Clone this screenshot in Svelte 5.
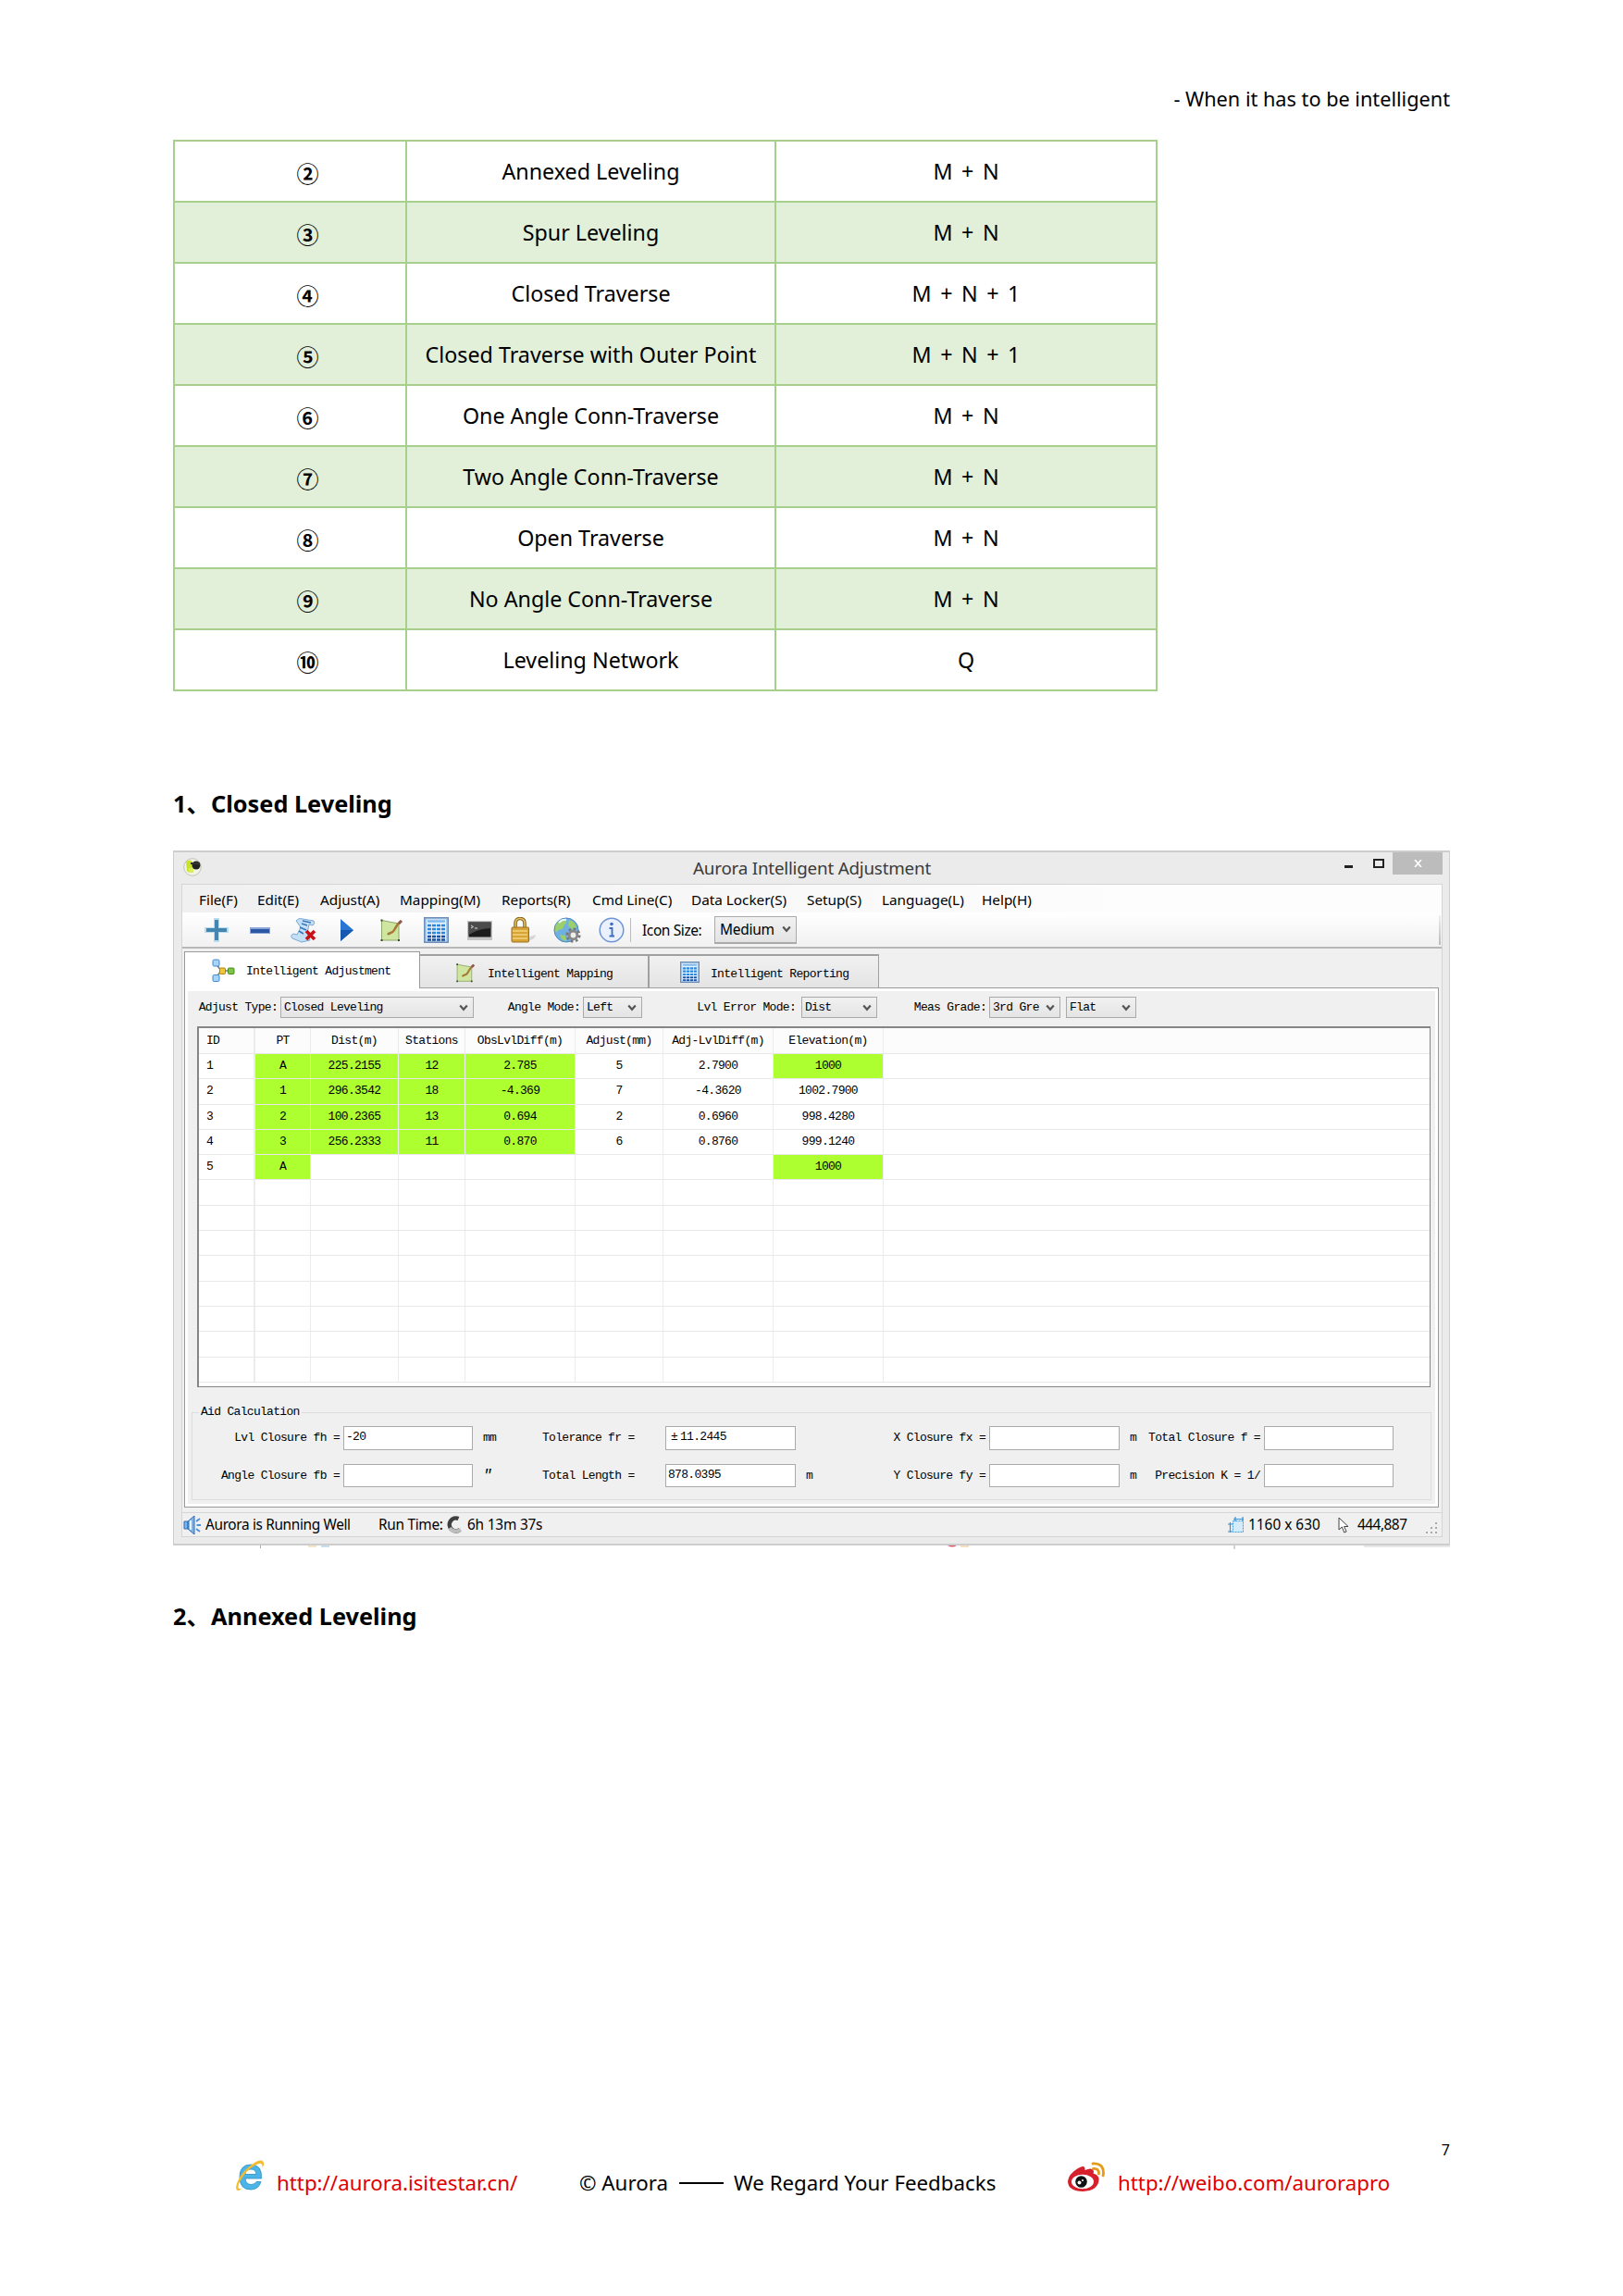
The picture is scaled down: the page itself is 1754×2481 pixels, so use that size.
<script>
  const methods = [
    ['②', 'Annexed Leveling', 'M + N'],
    ['③', 'Spur Leveling', 'M + N'],
    ['④', 'Closed Traverse', 'M + N + 1'],
    ['⑤', 'Closed Traverse with Outer Point', 'M + N + 1'],
    ['⑥', 'One Angle Conn-Traverse', 'M + N'],
    ['⑦', 'Two Angle Conn-Traverse', 'M + N'],
    ['⑧', 'Open Traverse', 'M + N'],
    ['⑨', 'No Angle Conn-Traverse', 'M + N'],
    ['⑩', 'Leveling Network', 'Q']
  ];
  const menu = ['File(F)', 'Edit(E)', 'Adjust(A)', 'Mapping(M)', 'Reports(R)', 'Cmd Line(C)', 'Data Locker(S)', 'Setup(S)', 'Language(L)', 'Help(H)'];
  const heads = ['ID', 'PT', 'Dist(m)', 'Stations', 'ObsLvlDiff(m)', 'Adjust(mm)', 'Adj-LvlDiff(m)', 'Elevation(m)', ''];
  const data = [
    ['1', 'A', '225.2155', '12', '2.785', '5', '2.7900', '1000', ''],
    ['2', '1', '296.3542', '18', '-4.369', '7', '-4.3620', '1002.7900', ''],
    ['3', '2', '100.2365', '13', '0.694', '2', '0.6960', '998.4280', ''],
    ['4', '3', '256.2333', '11', '0.870', '6', '0.8760', '999.1240', ''],
    ['5', 'A', '', '', '', '', '', '1000', '']
  ];
  const blank = Array(9).fill('');
  const rows = [...data, ...Array(8).fill(blank)];
  const isInput = (r, c) => (c === 1 && r < 5) || (c > 1 && c < 5 && r < 4) || (c === 7 && (r === 0 || r === 4));
</script>

{#snippet chevron()}
  <svg class="chev" viewBox="0 0 10 8"><path d="M1.2 1.5 5 5.8 8.8 1.5" fill="none" stroke="#555" stroke-width="2.2" /></svg>
{/snippet}

{#snippet mapIcon(size)}
  <svg width={size} height={size} viewBox="0 0 26 26">
    <path d="M2.5 2.5 21 6V24H2.500Z" fill="#cfe6a0" stroke="#8fa568" />
    <path d="M9 18c2-3 5-1 7-5s4-7 7.500-10" fill="none" stroke="#a67a35" stroke-width="2.500" />
    <path d="M20 5l3-3 2 2-3 3z" fill="#8c5a50" />
    <path d="M1.500 1.500h2v2h-2zM1.500 23h2v2h-2zM20 23h2v2h-2z" fill="#35482a" />
  </svg>
{/snippet}

{#snippet sheetIcon(w, h)}
  <svg width={w} height={h} viewBox="0 0 27 28" preserveAspectRatio="none">
    <rect x=".7" y=".7" width="25.600" height="26.600" fill="#a9c8ea" stroke="#6c8db5" stroke-width="1.400" />
    <rect x="3" y="2.500" width="21" height="23" fill="#e6f2fd" />
    <path d="M4 4.500h19" stroke="#7fb9ea" stroke-width="2.500" />
    <path d="M4 9h19M4 13h19M4 17h19" stroke="#2f86d8" stroke-width="2.600" stroke-dasharray="4 1" />
    <path d="M4 21h19M4 24.500h19" stroke="#1d4f9e" stroke-width="2.400" stroke-dasharray="4 1" />
  </svg>
{/snippet}

<div class="page">
  <header>- When it has to be intelligent</header>

  <div class="methods">
    {#each methods as [no, name, count], i}
      <div class="mrow" class:alt={i % 2 === 1}>
        <span class="no">{no}</span><span>{name}</span><span class="formula">{count}</span>
      </div>
    {/each}
  </div>

  <h2 class="first"><span class="num">1、</span>Closed Leveling</h2>

  <div class="window">
    <div class="titlebar">
      <svg class="logo" viewBox="0 0 20 20">
        <circle cx="10" cy="10" r="9.300" fill="#f2f3e8" stroke="#bfc2b8" />
        <path d="M3 4q4-3 7 0v11q-4 2-6-1Z" fill="#c9e32d" />
        <path d="M5 11h6v5H7Z" fill="#dcec5a" />
        <circle cx="14" cy="8" r="4.500" fill="#20221f" />
        <path d="M8 5h10v2H8z" fill="#333" />
      </svg>
      <span class="title">Aurora Intelligent Adjustment</span>
      <i class="min"></i><i class="max"></i>
      <span class="close"><svg width="9" height="8" viewBox="0 0 9 8"><path d="M1 0 8 8M8 0 1 8" stroke="#fff" stroke-width="1.700" /></svg></span>
    </div>

    <div class="client">
      <nav>{#each menu as m}<span>{m}</span>{/each}</nav>

      <div class="toolbar">
        <div class="icons">
          <svg width="26" height="26" viewBox="0 0 26 26">
            <path d="M10 0h6v10h10v6H16v10h-6V16H0v-6h10Z" fill="#b9ddec" />
            <path d="M11 2h4v9h9v4h-9v9h-4v-9H2v-4h9Z" fill="#4486b0" />
          </svg>
          <svg width="22" height="7" viewBox="0 0 22 7"><rect width="22" height="7" fill="#8aa6d8" /><rect x="1" y="2" width="20" height="4" fill="#2c57a5" /></svg>
          <svg width="28" height="27" viewBox="0 0 28 27">
            <path d="M6 3Q9-1 13 1l12 2q2 3-1 5l-4-1-2 9 3 8-9 2-10-4q-3-3 1-5l4 1 4-8Z" fill="#c4e0f6" stroke="#78a9d6" />
            <path d="M12 6l6 2M10 10l7 3M9 14l5 3M13 3l9 2" stroke="#3577b8" stroke-width="1.500" />
            <path d="M17 14l9 9M26 14l-9 9" stroke="#c81216" stroke-width="3.600" />
          </svg>
          <svg width="14" height="24" viewBox="0 0 14 24"><path d="M0 0 14 12 0 24Z" fill="#2a75d2" /><path d="M0 12h14L0 24Z" fill="#1558b0" /></svg>
          {@render mapIcon(26)}
          {@render sheetIcon(27, 28)}
          <svg width="27" height="21" viewBox="0 0 27 21">
            <rect width="27" height="21" fill="#c4c4c4" /><rect x="1.500" y="1.500" width="24" height="16" fill="#1b1b1b" />
            <path d="M1.500 1.500h24V8Q14 8 1.500 15Z" fill="#4b4b4b" /><path d="M4 5l2.500 1.500L4 8M8 8h3" fill="none" stroke="#ddd" />
          </svg>
          <svg width="28" height="28" viewBox="0 0 28 28">
            <path d="M18 22l9-3q0 5-9 7Z" fill="#d5d5d5" />
            <path d="M5 12V7q0-5.500 5-5.500T15 7v5" fill="none" stroke="#8a6518" stroke-width="3.600" />
            <path d="M5 12V7q0-5.500 5-5.500T15 7v5" fill="none" stroke="#e4c268" stroke-width="1.500" />
            <rect x="1" y="11" width="18.500" height="16" rx="1" fill="#d9a436" stroke="#9a7120" />
            <path d="M2 15h16M2 19h16M2 23h16" stroke="#f2d37e" stroke-width="1.300" />
          </svg>
          <svg width="30" height="28" viewBox="0 0 30 28">
            <circle cx="14" cy="14" r="13" fill="#6fb0e2" stroke="#4a88bd" />
            <path d="M3 8Q6 2 13 2q3 4-1 6l-2 5q-5 0-7 4-2-5 0-9ZM17 3q7 2 8 8l-5 2-4-4ZM7 19l6 1 1 6Q9 26 7 19Z" fill="#9bcf6a" />
            <path d="M6 6q4-4 8-3" stroke="#e9f7ff" stroke-width="2" fill="none" />
            <circle cx="21.500" cy="19.500" r="6.800" fill="none" stroke="#777" stroke-width="2.500" stroke-dasharray="2.700 2.640" />
            <circle cx="21.500" cy="19.500" r="4.300" fill="#eee" stroke="#888" stroke-width="2.800" />
          </svg>
          <svg width="28" height="28" viewBox="0 0 28 28">
            <circle cx="14" cy="14" r="12.800" fill="#eaf1fd" stroke="#6e93d6" stroke-width="1.500" />
            <circle cx="14" cy="7.500" r="1.800" fill="#3d6cc6" /><path d="M11.500 12h3v8M11.500 20.500h5.500" fill="none" stroke="#3d6cc6" stroke-width="1.800" />
          </svg>
        </div>
        <i class="sep"></i>
        <span class="sizelabel">Icon Size:</span>
        <span class="combo sizecombo">Medium{@render chevron()}</span>
        <i class="endsep"></i>
      </div>

      <div class="tabs">
        <span class="tab active">
          <svg width="25" height="26" viewBox="0 0 25 26">
            <path d="M4 5l6 8h10M4 21l6-8" fill="none" stroke="#7a7a72" stroke-width="1.600" />
            <rect x="1" y="1" width="7" height="7" rx="1.500" fill="#a9d4f7" stroke="#3f86cc" />
            <rect x="1" y="17.500" width="7" height="7" rx="1.500" fill="#a9d4f7" stroke="#3f86cc" />
            <rect x="8.500" y="10" width="6" height="6.500" rx="1" fill="#f0c63a" stroke="#a9841b" />
            <rect x="17.500" y="10" width="6.500" height="6.500" rx="1" fill="#7cc444" stroke="#4c8a26" />
          </svg><span>Intelligent Adjustment</span>
        </span>
        <span class="tab second">{@render mapIcon(22)}<span>Intelligent Mapping</span></span>
        <span class="tab third">{@render sheetIcon(21, 23)}<span>Intelligent Reporting</span></span>
        <i></i>
      </div>

      <div class="panel">
        <div class="filters">
          <span>Adjust Type:</span><span class="combo">Closed Leveling{@render chevron()}</span>
          <span>Angle Mode:</span><span class="combo">Left{@render chevron()}</span>
          <span class="error">Lvl Error Mode:</span><span class="combo">Dist{@render chevron()}</span>
          <span>Meas Grade:</span><span class="combo">3rd Gre{@render chevron()}</span>
          <span class="combo flat">Flat{@render chevron()}</span>
        </div>

        <div class="grid">
          <div class="grow head">{#each heads as h}<span>{h}</span>{/each}</div>
          {#each rows as row, r}
            <div class="grow">{#each row as cell, c}<span class:green={isInput(r, c)}>{cell}</span>{/each}</div>
          {/each}
        </div>

        <fieldset>
          <legend>Aid Calculation</legend>
          <div class="calc">
            <span class="r">Lvl Closure fh =</span><b>-20</b><span>mm</span>
            <span class="l">Tolerance fr =</span><b><u>±</u>11.2445</b><span></span>
            <span class="x">X Closure fx =</span><b></b><span>m</span>
            <span class="x">Total Closure f =</span><b></b>
            <span class="r">Angle Closure fb =</span><b></b><span class="sec">″</span>
            <span class="l">Total Length =</span><b>878.0395</b><span>m</span>
            <span class="x">Y Closure fy =</span><b></b><span>m</span>
            <span class="x">Precision K = 1/</span><b></b>
          </div>
        </fieldset>
      </div>

      <div class="status">
        <svg width="20" height="22" viewBox="0 0 20 22">
          <path d="M1 7h4v8H1zM5 7l7-6v20l-7-6z" fill="#7db4ea" stroke="#2c6db8" />
          <path d="M8 6v10" stroke="#e7f4ff" stroke-width="2" /><path d="M14 7l4-3M14.500 11H19M14 15l4 3" stroke="#4b8fd6" stroke-width="1.800" />
        </svg>
        <span class="s1">Aurora is Running Well</span>
        <span class="s2">Run Time:</span>
        <svg width="19" height="20" viewBox="0 0 19 20"><path d="M13.500 3A7 7 0 1 0 15 15" fill="none" stroke="#3f3f3f" stroke-width="4.500" /><path d="M4 13q4 6 12 2" fill="none" stroke="#bdbdbd" stroke-width="4" /></svg>
        <span class="s3">6h 13m 37s</span>
        <svg class="dim" width="18" height="18" viewBox="0 0 18 18">
          <path d="M5.500 4.500h11v12h-11z" fill="#d3ebfb" stroke="#3d9fe0" stroke-dasharray="2 1" /><path d="M6 2.500h11M2.500 6v11M8 0v5M16 0v5M0 8h5M0 16h5" stroke="#3291d8" stroke-width="1.200" />
        </svg>
        <span class="s4">1160 x 630</span>
        <svg class="cur" width="12" height="18" viewBox="0 0 12 18"><path d="M1 1v13l3.300-3 2.500 6 2.300-1-2.500-5.500H11Z" fill="#fff" stroke="#444" /></svg>
        <span class="s5">444,887</span>
        <svg class="grip" width="14" height="14" viewBox="0 0 14 14"><path d="M10 1h2v2h-2zM5 6h2v2H5zM10 6h2v2h-2zM0 11h2v2H0zM5 11h2v2H5zM10 11h2v2h-2z" fill="#a8a8a8" /></svg>
      </div>
    </div>
  </div>

  <svg class="fringe" width="1380" height="5" viewBox="0 0 1380 5">
    <path d="M94.500 0v3M1147 0v4" stroke="#aaa" /><path d="M146 1h9" stroke="#f4e6c4" stroke-width="2" /><path d="M160 1h9" stroke="#c8dff0" stroke-width="2" />
    <path d="M837 0q5 3 10 0z" fill="#d9536a" /><path d="M851 1h9" stroke="#f6e0c0" stroke-width="2" /><path d="M1287 1h93" stroke="#e8e8e8" stroke-width="2" />
  </svg>

  <h2><span class="num">2、</span>Annexed Leveling</h2>

  <div class="pageno">7</div>
  <footer>
    <svg class="ie" width="33" height="36" viewBox="0 0 33 36">
      <path d="M28.500 21H11q.5 6.500 6.500 6.500 4 0 5.500-3h5q-2.500 8.500-11 8.500Q5 33 5 19.500T17 6q12.500 0 11.500 15ZM11 16.500h12q-.5-5.500-6-5.500t-6 5.500Z" fill="#4db4e6" stroke="#2b8fc8" stroke-width=".8" fill-rule="evenodd" />
      <path d="M4 34Q-1 34 2.500 25 7 14 18 6q10-7 12.500-3 1.500 2.500-1 7 .5-6-3.500-5Q18 7 10 17 3 26 3.500 31q.5 2 4 .5Q5 34 4 34Z" fill="#f3bd2f" />
    </svg>
    <span class="url a">http://aurora.isitestar.cn/</span>
    <span class="copy">© Aurora</span><i></i><span class="regard">We Regard Your Feedbacks</span>
    <svg class="weibo" width="42" height="33" viewBox="0 0 42 33">
      <path d="M1 21Q2 13 12 7q7-4 7.500 0v2q7-3 9 0 1 2 0 3.500 7 2 6 8Q33 31 17.500 32 1 31.500 1 21Z" fill="#d6202b" />
      <ellipse cx="17" cy="21.500" rx="12" ry="7.800" fill="#fff" /><circle cx="15.500" cy="21.500" r="6.300" fill="#111" /><circle cx="13.500" cy="22.500" r="2" fill="#fff" /><circle cx="17" cy="20" r="1" fill="#fff" />
      <path d="M28 2q11.500-1 11.500 10.500 0 1-.5 2.500M28.500 7.500q6.500-.5 6 5.500" fill="none" stroke="#e59b1a" stroke-width="2.800" stroke-linecap="round" />
    </svg>
    <span class="url b">http://weibo.com/aurorapro</span>
  </footer>
</div>

<style>
  :global(body) { background: #fff; }
  .page { width: 1754px; height: 2481px; box-sizing: border-box; padding: 0 187px; overflow: hidden; color: #000; font: 23.250px/30px 'Noto Sans', 'Noto Sans CJK SC', sans-serif; display: flex; flex-direction: column; }
  .page * { box-sizing: border-box; white-space: nowrap; }
  svg { display: block; flex: none; }
  header { height: 151px; padding-top: 92px; text-align: right; font-size: 21.700px; }
  .methods { width: 1064px; border: 2px solid #a8d08d; border-bottom: 0; flex: none; }
  .mrow { display: grid; grid-template-columns: 249px 399px 1fr; height: 66px; border-bottom: 2px solid #a8d08d; }
  .mrow span { display: flex; align-items: center; justify-content: center; padding-bottom: 1px; }
  .mrow span + span { border-left: 2px solid #a8d08d; }
  .mrow .no { padding: 4px 0 0 38px; font: 700 24px/30px 'Noto Sans CJK SC', sans-serif; }
  .mrow .formula { word-spacing: 3.500px; }
  .alt { background: #e2efd9; }
  h2 { margin: 0; font-size: 25.300px; line-height: 34px; height: 34px; display: flex; flex: none; }
  h2 .num { width: 41px; }
  h2.first { margin: 104px 0 34px; }
  .fringe { margin-bottom: 54px; }

  .window { height: 751px; border: 2px solid #cdcdcd; border-width: 2px 1px; background: #ebebeb; padding: 0 7px 7px 8px; flex: none; display: flex; flex-direction: column; }
  .titlebar { height: 34px; display: flex; align-items: flex-start; flex: none; }
  .logo { width: 20px; height: 20px; margin: 6px 0 0 2px; }
  .title { margin-left: 531px; width: 265px; color: #3a3a3a; font: 18.800px/35px 'Noto Sans', sans-serif; letter-spacing: -0.200px; }
  .min { width: 9px; height: 3px; background: #222; margin: 14px 22px 0 440px; }
  .max { width: 12px; height: 10px; border: 2px solid #222; margin: 7px 9px 0 0; }
  .close { width: 54px; height: 24px; background: #bcbcbc; display: flex; align-items: center; justify-content: center; }
  .client { border: 1px solid #d5d5d5; flex: 1; background: #f0f0f0; display: flex; flex-direction: column; }
  nav { display: grid; grid-template-columns: 63px 68px 86px 110px 98px 107px 125px 81px 108px 1fr; padding: 1px 0 0 18px; height: 30px; flex: none; background: linear-gradient(90deg, #f0f0f0, #fdfdfd 75%); font: 15.300px/30px 'Noto Sans', sans-serif; }
  .toolbar { height: 39px; flex: none; display: flex; align-items: center; background: linear-gradient(#fff, #f1f1f1); border-bottom: 2px solid #b8b8b8; font: 15.500px/24px 'Noto Sans', sans-serif; }
  .icons { width: 473px; padding: 1px 0 0 13px; display: grid; grid-template-columns: 47px 47px 47px 47px 50px 47px 47px 47px 48px 48px; place-items: center; flex: none; }
  .sep { width: 1px; height: 26px; background: #bbb; margin-left: 11px; }
  .sizelabel { margin-left: 12px; width: 78px; letter-spacing: -0.400px; }
  .combo { border: 1px solid #aaa; background: linear-gradient(#f1f1f1, #e4e4e4); display: flex; align-items: center; justify-content: space-between; padding: 0 5px 0 3px; }
  .chev { width: 10px; height: 8px; }
  .sizecombo { width: 89px; height: 30px; padding: 0 5px; border-bottom-width: 2px; letter-spacing: -0.300px; }
  .endsep { width: 2px; height: 32px; background: linear-gradient(#eee, #bbb); margin-left: auto; margin-right: 1px; }

  .tabs, .panel { font-family: 'Liberation Mono', monospace; font-size: 13px; letter-spacing: -0.690px; line-height: 16px; }
  .tabs { height: 43px; margin-left: 2px; padding-top: 4px; display: flex; align-items: flex-end; flex: none; }
  .tab { height: 37px; width: 248px; border: 1px solid #a0a0a0; border-top-width: 2px; border-left: 0; display: flex; align-items: center; background: linear-gradient(#f1f1f1, #e4e4e4); }
  .tab svg { margin-top: 1px; }
  .tab span { padding-top: 5px; }
  .tab.active { width: 255px; height: 40px; border: 1px solid #999; border-bottom: 0; background: #fff; padding-left: 29px; gap: 12px; }
  .active span { padding-top: 3px; }
  .second { padding-left: 38px; gap: 13px; border-right-width: 2px; }
  .third { padding-left: 33px; gap: 12px; }
  .tabs i { flex: 1; height: 1px; background: #999; margin-right: 3px; }
  .panel { margin: 0 3px 0 2px; height: 561px; flex: none; border: 1px solid #999; border-top: 0; padding: 3px; background: linear-gradient(#f0f0f0, #f0f0f0) content-box, #fff; }
  .filters { height: 38px; display: grid; grid-template-columns: 87px 209px 118px 64px 172px 82px 121px 77px 82px; padding: 6px 0 9px 13px; }
  .filters > span:not(.combo) { align-self: center; justify-self: end; padding-right: 3px; }
  .filters > span.error:not(.combo) { padding-right: 6px; }
  .filters .flat { margin-left: 6px; }
  .filters .combo { height: 23px; }
  .grid { height: 390px; margin: 0 5px 0 10px; border: 2px solid #858585; border-right-width: 1px; border-bottom-width: 1px; background: #fff; overflow: hidden; }
  .grow { display: grid; grid-template-columns: 61px 60px 95px 72px 119px 95px 119px 119px 1fr; height: 27.300px; }
  .grow span { display: flex; align-items: center; justify-content: center; border-right: 1px solid #ececf0; border-bottom: 1px solid #e8e8ea; }
  .grow span:first-child { justify-content: flex-start; padding-left: 8px; border-right-width: 2px; }
  .grow span:last-child { border-right: 0; }
  .grow.head { height: 28px; background: #fcfcfd; }
  .grow .green { background: #adff2f; }
  fieldset { margin: 16px 4px 0; padding: 0; border: 1px solid #dcdcdc; height: 106px; min-width: 0; }
  legend { margin-left: 7px; padding: 0 2px; height: 22px; line-height: 22px; }
  .calc { margin-top: 4px; display: grid; grid-template-columns: 163px 140px 75px 133px 141px 72px 137px 141px 28px 128px 140px; grid-template-rows: 26px 25px; row-gap: 15px; }
  .calc > * { align-self: center; }
  .calc b { font-weight: 400; height: 100%; background: #fff; border: 1px solid #aaa; padding: 3px 2px; }
  .calc u { text-decoration: none; display: inline-block; width: 13px; padding-left: 3px; }
  .calc .r, .calc .x { justify-self: end; padding-right: 4px; }
  .calc span:not(.r):not(.x):not(.l) { padding-left: 11px; }
  .calc .sec { font-size: 16px; font-style: italic; }
  .status { margin-top: 5px; border-top: 1px solid #d5d5d5; display: flex; align-items: center; flex: 1; font: 15.400px/24px 'Noto Sans', sans-serif; padding-left: 1px; }
  .s1 { margin-left: 4px; width: 187px; letter-spacing: -0.350px; }
  .s2 { width: 73px; letter-spacing: -0.300px; }
  .s3 { margin-left: 4px; letter-spacing: -0.200px; }
  .dim { margin-left: auto; }
  .s4 { margin-left: 4px; width: 97px; }
  .s5 { margin-left: 9px; width: 74px; letter-spacing: -0.500px; }
  .grip { margin: 6px 3px 0 0; }

  .pageno { margin-top: auto; text-align: right; font-size: 16px; line-height: 20px; flex: none; }
  footer { height: 148px; flex: none; display: flex; align-items: flex-start; font-size: 22.300px; line-height: 30px; }
  footer i { width: 48px; height: 2px; background: #000; margin: 25px 11px 0; }
  footer span { margin-top: 11px; }
  .ie { margin-left: 67px; }
  .url { color: #e00000; }
  .a { margin-left: 12px; width: 327px; }
  .copy { width: 97px; }
  .regard { width: 360px; }
  .weibo { margin-top: 3px; }
  .b { margin-left: 13px; }
</style>
